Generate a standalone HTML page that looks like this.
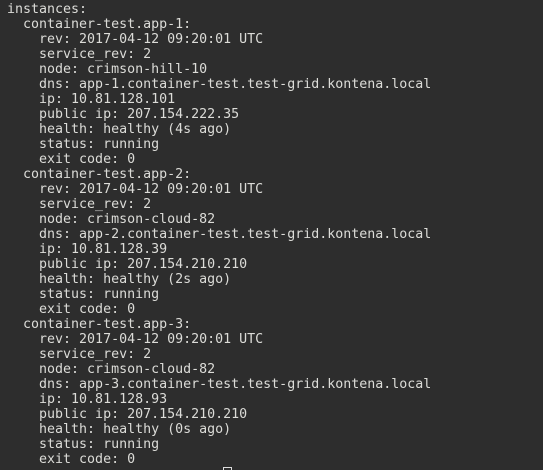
<!DOCTYPE html>
<html><head><meta charset="utf-8"><style>
html,body{margin:0;padding:0;background:#2d2d2d;width:543px;height:470px;overflow:hidden}
pre{margin:0;padding:2px 0 0 7px;font-family:"DejaVu Sans Mono","Liberation Mono",monospace;font-size:13.3px;line-height:15px;color:#dcdcd8;white-space:pre}
.g{color:#8ae234}
.cur{display:inline-block;width:7px;height:13px;border:1px solid #ddd;vertical-align:-2px}
</style></head><body><pre>instances:
  container-test.app-1:
    rev: 2017-04-12 09:20:01 UTC
    service_rev: 2
    node: crimson-hill-10
    dns: app-1.container-test.test-grid.kontena.local
    ip: 10.81.128.101
    public ip: 207.154.222.35
    health: healthy (4s ago)
    status: running
    exit code: 0
  container-test.app-2:
    rev: 2017-04-12 09:20:01 UTC
    service_rev: 2
    node: crimson-cloud-82
    dns: app-2.container-test.test-grid.kontena.local
    ip: 10.81.128.39
    public ip: 207.154.210.210
    health: healthy (2s ago)
    status: running
    exit code: 0
  container-test.app-3:
    rev: 2017-04-12 09:20:01 UTC
    service_rev: 2
    node: crimson-cloud-82
    dns: app-3.container-test.test-grid.kontena.local
    ip: 10.81.128.93
    public ip: 207.154.210.210
    health: healthy (0s ago)
    status: running
    exit code: 0
<span class="g">user@host:~/kontena/test</span> $ <span class="cur"></span></pre></body></html>
